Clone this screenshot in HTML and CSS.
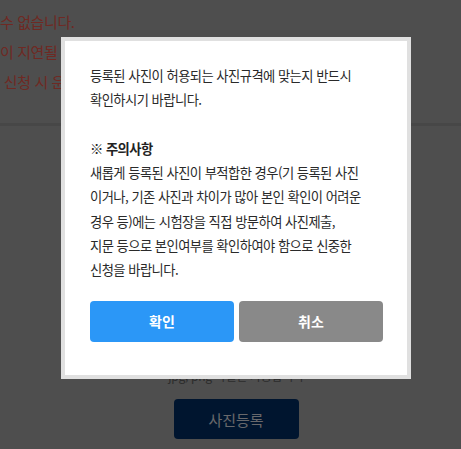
FILE: index.html
```html
<!DOCTYPE html>
<html lang="ko">

<head>
    <meta charset="UTF-8" />
    <meta name="viewport" content="width=device-width, initial-scale=1.0" />
    <title>사진 등록</title>
    <link rel="stylesheet" href="styles.css">
</head>

<body>
    <div class="page">
        <!-- 안내 문구 -->
        <ul class="notice">
            <li>수 없습니다.</li>
            <li>이 지연될 수 있습니다. 여유 있게 신청하세요.</li>
            <li>&nbsp;신청 시 운영</li>
        </ul>

        <div class="photo-area">
            <div class="photo-box"></div>
            <p class="photo-guide">jpg, png 파일만 가능합니다</p>
            <button class="btn-register">사진등록</button>
        </div>
    </div>

    <!-- 사진 등록 확인 팝업 -->
    <div class="dim">
        <div class="modal">
            <div class="modal-body">
                <p class="nowrap">등록된 사진이 허용되는 사진규격에 맞는지 반드시<br>확인하시기 바랍니다.</p>
                <p class="caution-title">※ 주의사항</p>
                <p class="nowrap">새롭게 등록된 사진이 부적합한 경우(기 등록된 사진<br>이거나, 기존 사진과 차이가 많아 본인 확인이 어려운<br>경우 등)에는 시험장을 직접 방문하여 사진제출,<br>지문 등으로 본인여부를 확인하여야 함으로 신중한<br>신청을 바랍니다.</p>
            </div>
            <div class="modal-btns">
                <button class="btn btn-ok">확인</button>
                <button class="btn btn-cancel">취소</button>
            </div>
        </div>
    </div>
</body>

</html>
```

FILE: styles.css
```css
* {
    box-sizing: border-box;
}

body {
    font-family: 'Noto Sans CJK KR', 'Noto Sans', sans-serif;
    background-color: #9c9c9c;
    margin: 0;
    padding: 0;
    color: #333;
    overflow: hidden;
}

.page {
    width: 472px;
}

.notice {
    list-style: none;
    margin: 0;
    padding: 12px 0 31px;
    border-bottom: 3px solid #8e8e8e;
    white-space: nowrap;
}

.notice li {
    font-size: 15px;
    line-height: 20px;
    color: #de5246;
    letter-spacing: -0.4px;
}

.notice li + li {
    margin-top: 10px;
}

.photo-area {
    display: flex;
    flex-direction: column;
    align-items: center;
}

.photo-box {
    width: 160px;
    height: 200px;
    margin-top: 30px;
    background: #b0b0b0;
}

.photo-guide {
    margin: 10px 0 0;
    font-size: 12px;
    line-height: 20px;
    color: #585858;
    letter-spacing: -0.3px;
}

.btn-register {
    margin-top: 13px;
    width: 125px;
    height: 40px;
    border: none;
    border-radius: 4px;
    background-color: #002a5e;
    color: #d0d0d6;
    font-family: inherit;
    font-size: 15px;
}

/* 팝업 */
.dim {
    position: fixed;
    top: 0;
    left: 0;
    width: 472px;
    height: 100%;
    background: rgba(0, 0, 0, 0.5);
    display: flex;
    justify-content: center;
    align-items: flex-start;
    padding-top: 37px;
}

.modal {
    width: 350px;
    background: #fff;
    border: 4px solid #e0e0e0;
    padding: 0 24px 33px 25px;
}

.modal-body {
    padding-top: 23px;
    font-size: 13.3px;
    line-height: 24.3px;
    letter-spacing: -0.55px;
    color: #2a2a2a;
}

.modal-body p {
    margin: 0;
}

.nowrap {
    white-space: nowrap;
}

.caution-title {
    margin-top: 24.3px !important;
    font-weight: bold;
    color: #222;
}

.modal-btns {
    display: flex;
    gap: 5px;
    margin-top: 18px;
}

.btn {
    flex: 1;
    height: 41px;
    border: none;
    border-radius: 4px;
    color: #fff;
    font-family: inherit;
    font-size: 14px;
    font-weight: bold;
    cursor: pointer;
}

.btn-ok {
    background-color: #2b97f7;
}

.btn-cancel {
    background-color: #898989;
}
```
